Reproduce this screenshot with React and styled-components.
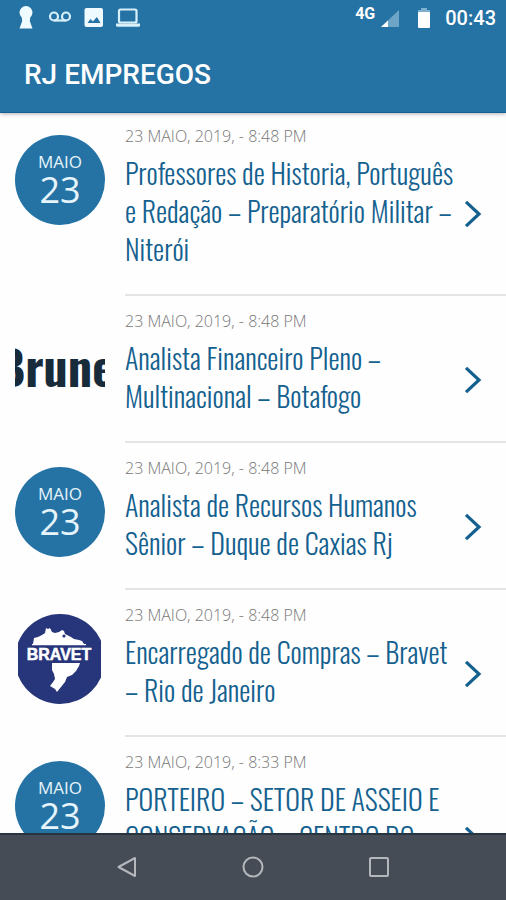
import React from "react";
import styled, { createGlobalStyle } from "styled-components";

const GlobalStyle = createGlobalStyle`
  * {
    box-sizing: border-box;
  }

  body {
    margin: 0;
    background: #fefefe;
    font-family: "Open Sans", sans-serif;
  }
`;

const Screen = styled.div`
  display: flex;
  flex-direction: column;
  height: 100vh;
  overflow: hidden;
`;

const TopBar = styled.header`
  position: relative;
  z-index: 1;
  flex: none;
  background: #2573a5;
  border-bottom: 1px solid #14618f;
  box-shadow: 0 1px 4px rgba(0, 0, 0, 0.3);
  color: #fff;
  font-family: Roboto, sans-serif;
`;

const StatusBar = styled.div`
  display: flex;
  justify-content: space-between;
  height: 36px;
  padding: 4px 10px 0 16px;
`;

const StatusGroup = styled.div`
  display: flex;
  align-items: center;
  gap: ${(props) => props.$gap};
  height: 28px;
`;

const Network = styled.span`
  align-self: flex-start;
  font-size: 16px;
  font-weight: 700;
  line-height: 20px;
`;

const Clock = styled.time`
  font-size: 20px;
  font-weight: 500;
  line-height: 28px;
`;

const AppTitle = styled.h1`
  margin: 0;
  padding: 21px 24px 19px;
  font-size: 28px;
  font-weight: 500;
  line-height: 36px;
`;

// The list starts slightly under the top bar
const JobList = styled.ul`
  flex: 1;
  min-height: 0;
  margin: -2px 0 0;
  padding: 0;
  overflow: hidden;
  list-style: none;
`;

const JobLink = styled.a`
  display: flex;
  gap: 20px;
  padding-left: 15px;
  color: #14618f;
  text-decoration: none;
`;

const Thumb = styled.div`
  flex: none;
  width: 90px;
  height: 90px;
  margin-top: 24px;
  overflow: hidden;
`;

const DateBadge = styled(Thumb)`
  display: flex;
  flex-direction: column;
  align-items: center;
  justify-content: center;
  border-radius: 50%;
  background: #2573a5;
  color: #e6f4fb;
`;

const Month = styled.span`
  font-size: 17px;
  line-height: 20px;
`;

const Day = styled.span`
  font-size: 36px;
  line-height: 36px;
`;

const JobBody = styled.div`
  display: flex;
  flex: 1;
  min-width: 0;
  padding: 15px 24px 0 0;
  border-bottom: 2px solid #e4e4e4;
`;

const JobText = styled.div`
  flex: 1;
  min-width: 0;
  padding-bottom: 26px;
`;

const Posted = styled.p`
  margin: 0 0 8px;
  color: #777;
  font-size: 16px;
  font-weight: 300;
  line-height: 20px;
`;

const JobTitle = styled.h2`
  margin: 0;
  font-family: Oswald, "Liberation Sans Narrow", "Roboto Condensed", "Open Sans Condensed", sans-serif;
  font-size: 28px;
  font-weight: 300;
  line-height: 38px;
  white-space: pre;
`;

const ChevronBox = styled.div`
  display: flex;
  flex: none;
  align-items: center;
  padding-top: 8px;
`;

const NavBar = styled.nav`
  display: flex;
  flex: none;
  justify-content: center;
  gap: 86px;
  height: 67px;
  padding-bottom: 2px;
  border-top: 2px solid #28343f;
  background: #464c56;
`;

const NavButton = styled.button`
  display: flex;
  align-items: center;
  justify-content: center;
  width: 40px;
  padding: 0;
  border: 0;
  background: none;
`;

const KeyholeIcon = () => (
  <svg width="20" height="28" viewBox="0 0 20 28" fill="#f0fbff" aria-hidden="true">
    <circle cx="10" cy="8.500" r="6.500" />
    <path d="M5.500 11h9l-.7 6 2.700 7.500h-13l2.700-7.500z" />
  </svg>
);

const VoicemailIcon = () => (
  <svg width="24" height="28" viewBox="0 0 24 28" fill="none" stroke="#d8f0fa" strokeWidth="2.200" aria-hidden="true">
    <circle cx="6" cy="12.500" r="4" />
    <circle cx="18" cy="12.500" r="4" />
    <path d="M6 16.500h12" />
  </svg>
);

const PictureIcon = () => (
  <svg width="20" height="28" viewBox="0 0 20 28" aria-hidden="true">
    <rect x="0.500" y="4" width="18.500" height="19" rx="2" fill="#eefaff" />
    <path d="M3.500 19l3-4 2.400 2.400 4-4.400 3.600 6z" fill="#2573a5" />
  </svg>
);

const LaptopIcon = () => (
  <svg width="24" height="28" viewBox="0 0 24 28" aria-hidden="true">
    <rect x="3" y="5.500" width="17.500" height="13" rx="1.500" fill="none" stroke="#d8f0fa" strokeWidth="2.200" />
    <path d="M0 19.500h24v1.700q0 1.500-1.500 1.500h-21Q0 22.700 0 21.200z" fill="#d8f0fa" />
  </svg>
);

const SignalIcon = () => (
  <svg width="18" height="28" viewBox="0 0 18 28" aria-hidden="true">
    <path d="M18 6v17H0z" fill="#6ea4c5" />
    <path d="M7 16.400V23H0z" fill="#fff" />
  </svg>
);

const BatteryIcon = () => (
  <svg width="14" height="28" viewBox="0 0 14 28" aria-hidden="true">
    <path d="M4 4h6v2h3v3H1V6h3z" fill="#7db0cc" />
    <rect x="1" y="8" width="12" height="16" rx="1" fill="#fff" />
  </svg>
);

const ChevronIcon = () => (
  <svg width="18" height="28" viewBox="0 0 18 28" fill="none" stroke="#14618f" strokeWidth="3.200" aria-hidden="true">
    <path d="M2 1.800L15 14 2 26.200" />
  </svg>
);

const BrunelLogo = () => (
  <svg width="90" height="90" viewBox="0 0 90 90" role="img" aria-label="Brunel">
    <text
      x="-18"
      y="67"
      fill="#172b3b"
      fontFamily="Oswald, 'Liberation Sans Narrow', sans-serif"
      fontSize="48"
      fontWeight="700"
    >
      Brunel
    </text>
  </svg>
);

const BravetLogo = () => (
  <svg width="90" height="90" viewBox="0 0 90 90" role="img" aria-label="Bravet">
    <clipPath id="bravet-clip">
      <rect x="3" y="0" width="83" height="90" />
    </clipPath>
    <circle cx="45" cy="45" r="45" fill="#27357a" clipPath="url(#bravet-clip)" />
    <path
      d="M18 30l1-6 4-1 4-2 3-2 1-5 2 1 2-1 2 4 3 1 4-1 3-2 2 1 1 3 6 3 3 2 5 1 3 1 2 3z"
      fill="#fff"
    />
    <circle cx="49" cy="22" r="1.600" fill="#27357a" />
    <path d="M17 30h54v1.300H17z" fill="#fff" />
    <path d="M37 49h28l-1 3-3 5-4 4-5 2-2 5-4 5-4 5-2-3-5-3 3-4 2-3-1-5-2-4z" fill="#fff" />
    <text
      x="44"
      y="46"
      fill="#fff"
      textAnchor="middle"
      fontFamily="'Liberation Sans', sans-serif"
      fontSize="16"
      fontWeight="700"
      stroke="#fff"
      strokeWidth="0.500"
    >
      BRAVET
    </text>
  </svg>
);

const jobs = [
  {
    id: 1,
    posted: "23 MAIO, 2019, - 8:48 PM",
    title: "Professores de Historia, Português\ne Redação – Preparatório Militar –\nNiterói",
  },
  {
    id: 2,
    posted: "23 MAIO, 2019, - 8:48 PM",
    title: "Analista Financeiro Pleno –\nMultinacional – Botafogo",
    logo: <BrunelLogo />,
  },
  {
    id: 3,
    posted: "23 MAIO, 2019, - 8:48 PM",
    title: "Analista de Recursos Humanos\nSênior – Duque de Caxias Rj",
  },
  {
    id: 4,
    posted: "23 MAIO, 2019, - 8:48 PM",
    title: "Encarregado de Compras – Bravet\n– Rio de Janeiro",
    logo: <BravetLogo />,
  },
  {
    id: 5,
    posted: "23 MAIO, 2019, - 8:33 PM",
    title: "PORTEIRO – SETOR DE ASSEIO E\nCONSERVAÇÃO – CENTRO DO\n ",
  },
];

const JobItem = ({ job }) => (
  <li>
    <JobLink href="#">
      {job.logo ? (
        <Thumb>{job.logo}</Thumb>
      ) : (
        <DateBadge>
          <Month>MAIO</Month>
          <Day>23</Day>
        </DateBadge>
      )}
      <JobBody>
        <JobText>
          <Posted>{job.posted}</Posted>
          <JobTitle>{job.title}</JobTitle>
        </JobText>
        <ChevronBox>
          <ChevronIcon />
        </ChevronBox>
      </JobBody>
    </JobLink>
  </li>
);

const App = () => {
  return (
    <>
      <GlobalStyle />
      <Screen>
        <TopBar>
          <StatusBar>
            <StatusGroup $gap="12px">
              <KeyholeIcon />
              <VoicemailIcon />
              <PictureIcon />
              <LaptopIcon />
            </StatusGroup>
            <StatusGroup $gap="18px">
              <StatusGroup $gap="6px">
                <Network>4G</Network>
                <SignalIcon />
              </StatusGroup>
              <StatusGroup $gap="14px">
                <BatteryIcon />
                <Clock>00:43</Clock>
              </StatusGroup>
            </StatusGroup>
          </StatusBar>
          <AppTitle>RJ EMPREGOS</AppTitle>
        </TopBar>
        <JobList>
          {jobs.map((job) => (
            <JobItem key={job.id} job={job} />
          ))}
        </JobList>
        <NavBar>
          <NavButton aria-label="Voltar">
            <svg width="24" height="24" viewBox="0 0 24 24" fill="none" stroke="#b4b7bb" strokeWidth="2">
              <path d="M20 3v18L3.500 12z" strokeLinejoin="round" />
            </svg>
          </NavButton>
          <NavButton aria-label="Início">
            <svg width="24" height="24" viewBox="0 0 24 24" fill="none" stroke="#b4b7bb" strokeWidth="2">
              <circle cx="12" cy="12" r="9.500" />
            </svg>
          </NavButton>
          <NavButton aria-label="Recentes">
            <svg width="24" height="24" viewBox="0 0 24 24" fill="none" stroke="#b4b7bb" strokeWidth="2">
              <rect x="3" y="3" width="18" height="18" rx="1" />
            </svg>
          </NavButton>
        </NavBar>
      </Screen>
    </>
  );
};

export default App;
